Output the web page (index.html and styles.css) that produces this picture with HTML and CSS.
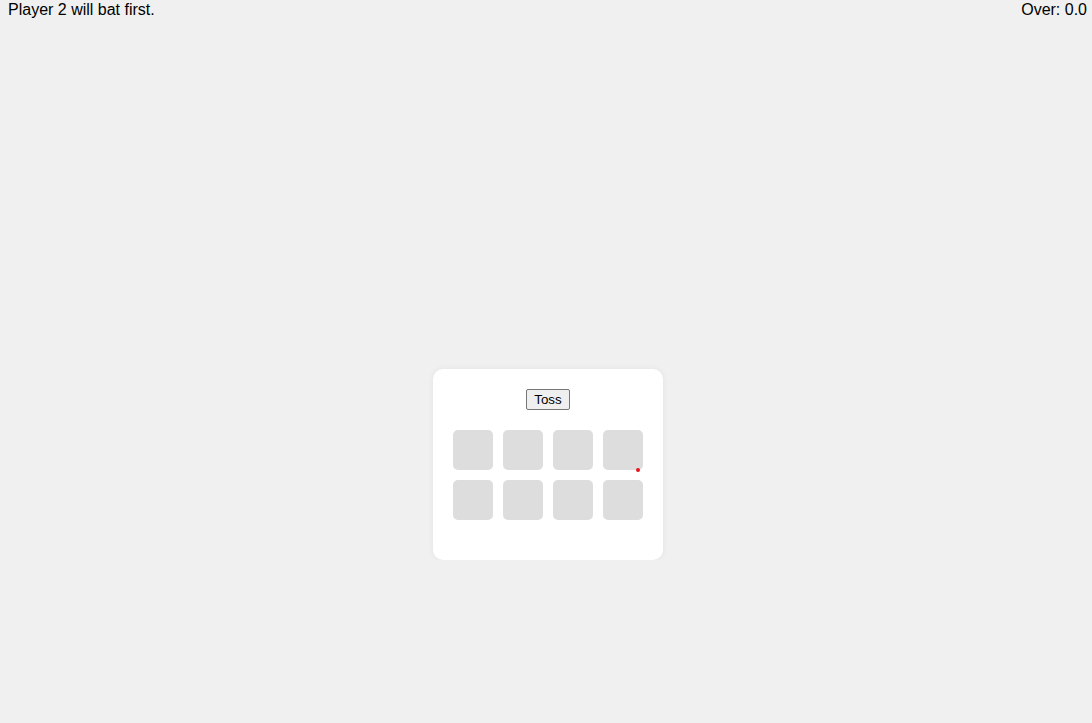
FILE: index.html
```html
<!DOCTYPE html>
<html>
<head>
<meta charset="utf-8">
<link rel="stylesheet" href="styles.css">
</head>
<body>
<div class="topbar">
  <span class="status">Player 2 will bat first.</span>
  <span class="over">Over: 0.0</span>
</div>
<div class="stage">
  <div class="card">
    <button class="toss">Toss</button>
    <div class="grid">
      <div class="cell"></div>
      <div class="cell"></div>
      <div class="cell"></div>
      <div class="cell marked"><span class="dot"></span></div>
      <div class="cell"></div>
      <div class="cell"></div>
      <div class="cell"></div>
      <div class="cell"></div>
    </div>
  </div>
</div>
</body>
</html>
```

FILE: styles.css
```css
html, body {
  margin: 0;
  padding: 0;
  background: #f0f0f0;
  font-family: "Liberation Sans", Arial, sans-serif;
  color: #000;
}
.topbar {
  display: flex;
  justify-content: space-between;
  padding: 1px 5px 0 8px;
  font-size: 16px;
  line-height: 18px;
}
.stage {
  display: flex;
  justify-content: center;
  padding: 350px 0 0 4px;
}
.card {
  width: 190px;
  background: #fff;
  border-radius: 10px;
  padding: 20px 20px 40px;
  box-shadow: 0 0 6px rgba(0,0,0,0.06);
  display: flex;
  flex-direction: column;
  align-items: center;
}
.toss {
  font-family: "Liberation Sans", Arial, sans-serif;
  font-size: 13.333px;
  line-height: 15px;
  padding: 2px 7px 2px 7px;
  border: 1px solid #767676;
  border-radius: 2px;
  background: #efefef;
  color: #000;
  margin: 0 0 20px;
}
.grid {
  display: grid;
  grid-template-columns: repeat(4, 40px);
  grid-auto-rows: 40px;
  gap: 10px;
}
.cell {
  background: #dddddd;
  border-radius: 5px;
  position: relative;
}
.dot {
  position: absolute;
  right: 3px;
  bottom: -2px;
  width: 4px;
  height: 4px;
  border-radius: 50%;
  background: #e8141b;
}
```
